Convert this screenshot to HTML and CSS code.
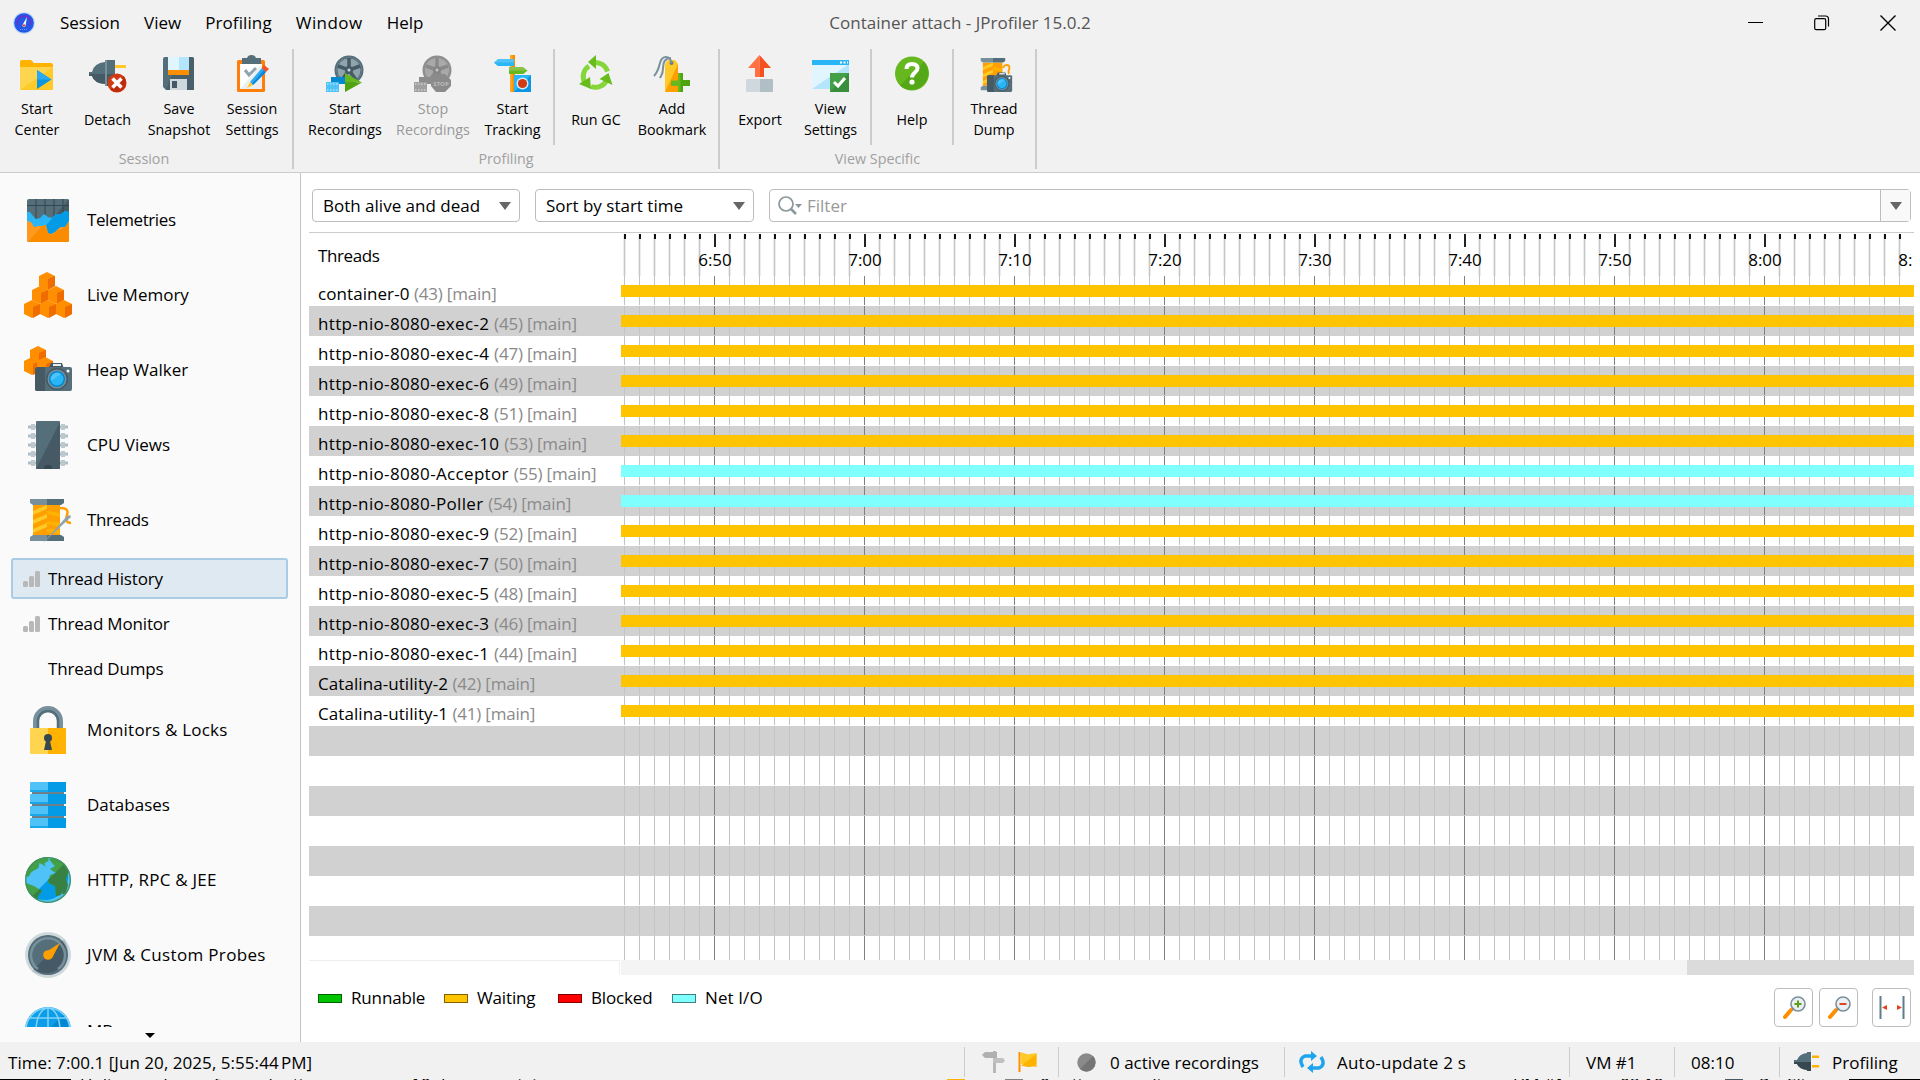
FILE: index.html
```html
<!DOCTYPE html>
<html lang="en">
<head>
<meta charset="utf-8">
<title>Container attach - JProfiler 15.0.2</title>
<link rel="stylesheet" href="styles.css">
</head>
<body>
<svg class="defs" width="0" height="0" aria-hidden="true">
  <defs>
    <g id="spool">
      <path fill="#ffa000" d="M4 6h27v30H4z"/><path fill="#ffc928" d="M4 12l14-6v4L4 16zM4 21l14-6v4L4 25zM4 30l14-6v4L4 34z"/><path fill="#ffb300" d="M18 12l13 2v4l-13-3zM18 22l13 2v4l-13-3zM18 30l13 1v4l-13-2z"/>
      <path fill="#78909c" d="M1 0h17v6H4L1 4zM1 42h17v-6H4l-3 2z"/><path fill="#546e7a" d="M18 0h17v4l-3 2H18zM18 42h17v-4l-3-2H18z"/>
    </g>
    <g id="camera">
      <path fill="#455a64" d="M13 8l3-6h11l2 6z"/><path fill="#e8eef0" d="M18 3h8v2h-8z"/><rect y="6" width="37" height="24" rx="2" fill="#546e7a"/><path fill="#455a64" d="M2 6h8v24H2a2 2 0 0 1-2-2V8z"/>
      <circle cx="22" cy="18" r="11" fill="#455a64"/><circle cx="22" cy="18" r="9.500" fill="#78909c"/><circle cx="22" cy="18" r="8" fill="#0288d1"/><circle cx="22" cy="18" r="6.500" fill="#29b6f6"/><path fill="#4fc3f7" d="M16 20a6.500 6.500 0 0 1 10-7z"/><circle cx="33" cy="10" r="1.500" fill="#fff"/>
    </g>
    <g id="cube"><path fill="#ff8f00" d="M0 4l8-4 8 4v10l-8 4-8-4z"/><path fill="#ef6c00" d="M9 7l7-3v10l-7 4z"/></g>
    <g id="reel"><circle cx="21" cy="15" r="14.500" fill="#546e7a"/><circle cx="21" cy="15" r="12.500" fill="#90a4ae"/><circle cx="21" cy="15" r="12" fill="none" stroke="#546e7a" stroke-width="1"/><g stroke="#455a64" stroke-width="3.500"><path d="M21 15V3M21 15l11-4M21 15l7 10M21 15l-7 10M21 15L10 11"/></g><circle cx="21" cy="15" r="4" fill="#455a64"/><circle cx="21" cy="15" r="1.500" fill="#cfd8dc"/></g>
    <g id="bars" fill="#b8b8b8"><rect y="11" width="5" height="6" rx="1.500"/><rect x="6" y="6" width="5" height="11" rx="1.500"/><rect x="12" y="1" width="5" height="16" rx="1.500"/></g>
    <g id="flag"><path fill="#ff8f00" d="M0 0h2v20H0z"/><path fill="#ffca28" d="M2 1c4-1 5 2 9 1 3 0 5-1 7-1v11H2z"/><path fill="#ffb300" d="M18 2v13c-4-1-5 0-8 0s-5-2-8-1z"/></g>
    <g id="lens"><circle cx="16" cy="8" r="7" fill="#eceff1" stroke="#78909c" stroke-width="1.600"/><path stroke="#ff8f00" stroke-width="4" stroke-linecap="round" d="M3 21l6-7"/><path stroke="#78909c" stroke-width="1.500" d="M10 14l2-2"/></g>
  </defs>
</svg>

<div class="window">
  <header class="titlebar">
    <svg class="logo" viewBox="0 0 22 22"><circle cx="11" cy="11" r="10.800" fill="#b9d2f5"/><circle cx="11" cy="11" r="9.800" fill="#2257e8"/><path d="M5 13a6.500 6.500 0 1 1 12 0" fill="none" stroke="#6a32c9" stroke-width="1.600"/><path fill="#fff" d="M14 5l-1.500 9a1.500 1.500 0 0 1-3-1z"/><circle cx="11" cy="13.500" r="1.200" fill="#e53935"/><path d="M7 17.500h8" stroke="#58a6f5" stroke-dasharray="1 1"/></svg>
    <nav class="menu"><span>Session</span><span>View</span><span class="menu-profiling">Profiling</span><span class="menu-window">Window</span><span>Help</span></nav>
    <h1 class="title">Container attach - JProfiler 15.0.2</h1>
    <div class="window-buttons">
      <svg viewBox="0 0 16 16"><path d="M0 7.500h15" stroke="#000" fill="none"/></svg>
      <svg viewBox="0 0 16 16"><g fill="none" stroke="#000" stroke-width="1.200"><rect x=".7" y="3.700" width="11" height="11" rx="1.500"/><path d="M4 1h7.500a3 3 0 0 1 3 3v7.500"/></g></svg>
      <svg viewBox="0 0 16 16"><path d="M.5.500l15 15M15.500.500l-15 15" stroke="#000" stroke-width="1.400"/></svg>
    </div>
  </header>

  <div class="toolbar">
    <section class="group group-session">
      <div class="tools">
        <div class="tool w72"><svg viewBox="0 0 38 38"><path fill="#ffb300" d="M2 7q0-2 2-2h9l3 3h17q2 0 2 2v5H2z"/><path fill="#ffca28" d="M2 12h33v23H2z"/><path fill="#ffd54f" d="M2 12h33L2 35z"/><path fill="#0c95e0" d="M19 15l14.500 9.500L19 34z"/><path fill="#29a9f2" d="M19 15l14.500 9.500H19z"/></svg><p>Start<br>Center</p></div>
        <div class="tool w70 single"><svg viewBox="0 0 38 38"><path fill="#546e7a" d="M0 17h3q2-9 13-10V5h10v26H16v-2Q5 28 3 21H0z"/><path fill="#455a64" d="M0 19h26v12H16v-2Q5 28 3 21H0z"/><path fill="#78909c" d="M16 5h2v26h-2z"/><path fill="#ffc928" d="M26 10h11v3H26z"/><circle cx="28" cy="28" r="9.500" fill="#d13a12"/><path fill="#bf2a0a" d="M34.700 21.300a9.500 9.500 0 0 1-13.400 13.400z"/><path stroke="#fff" stroke-width="3.600" d="M23.500 23.500l9 9M32.500 23.500l-9 9"/></svg><p>Detach</p></div>
        <div class="tool w74"><svg viewBox="0 0 38 38"><path fill="#546e7a" d="M3 4q0-2 2-2h27q2 0 2 2v31H6l-3-3z"/><path fill="#455a64" d="M19 2h13q2 0 2 2v31H6z" opacity=".7"/><path fill="#e1f5fe" d="M8 2h11v13H8z"/><path fill="#b3e5fc" d="M19 2h10v13H19z"/><path fill="#ff8f00" d="M8 15h21v5H8z"/><path fill="#cfd8dc" d="M10 24h17v11H10z"/><path fill="#455a64" d="M12 26h5v7h-5z"/></svg><p>Save<br>Snapshot</p></div>
        <div class="tool w72"><svg viewBox="0 0 38 38"><rect x="4" y="5" width="28" height="32" rx="1.500" fill="#ff7d0a"/><path fill="#fff" d="M7 9h22v25H7z"/><path fill="#eceff1" d="M29 9v25H7z"/><path fill="#546e7a" d="M9 3h5q1-3 4.500-3T23 3h5v6H9z"/><path d="M12 15l4 5 7-7" fill="none" stroke="#90a4ae" stroke-width="3"/><path fill="#29a9f2" d="M17 27L29 13l4 4-13 13z"/><path fill="#0c86d6" d="M19 29l12-14 2 2-13 13z"/><path fill="#f4511e" d="M29 13l2-3 5 4-3 3z"/><path fill="#ffca28" d="M14 33l3-6 3 3z"/></svg><p>Session<br>Settings</p></div>
      </div>
      <p class="caption">Session</p>
    </section>
    <section class="group group-profiling">
      <div class="tools">
        <div class="tool w88"><svg viewBox="0 0 38 38"><g transform="translate(2)"><use href="#reel"/></g><path fill="#0288d1" d="M5 22h15v7H5z"/><path fill="#4fc3f7" d="M0 27h13v10H0z"/><path stroke="#e1f5fe" stroke-dasharray="1.500 1.500" d="M1 29h11M1 35h11"/><path fill="#66b81e" d="M19 18l17 9.500H19z"/><path fill="#4ea30f" d="M19 37l17-9.500H19z"/></svg><p>Start<br>Recordings</p></div>
        <div class="tool w88 disabled"><svg viewBox="0 0 38 38"><circle cx="23" cy="15" r="14.500" fill="#8f8f8f"/><circle cx="23" cy="15" r="12" fill="#a9a9a9"/><path stroke="#8a8a8a" stroke-width="3.500" d="M23 15V3M23 15l11-4M23 15l7 10M23 15l-7 10M23 15L12 11"/><circle cx="23" cy="15" r="4" fill="#858585"/><circle cx="23" cy="15" r="1.500" fill="#c4c4c4"/><path fill="#8c8c8c" d="M5 22h15v7H5z"/><path fill="#a0a0a0" d="M0 27h13v10H0z"/><path stroke="#e6e6e6" stroke-dasharray="1.500 1.500" d="M1 29h11M1 35h11"/><path fill="#8b8b8b" d="M22 19h9l6 6v6l-6 6h-9l-5-6v-6z"/><text class="stop" x="27" y="30.500">STOP</text></svg><p>Stop<br>Recordings</p></div>
        <div class="tool w71"><svg viewBox="0 0 38 38"><path fill="#ffa726" d="M16 0h5v37h-5z"/><path fill="#fb8c00" d="M18.500 0H21v37h-2.500z"/><path fill="#4fc3f7" d="M0 7.500L4 4h16v7H4z"/><path fill="#29b6f6" d="M0 7.500h20V11H4z"/><path fill="#8bc34a" d="M15 12h14l4.500 3.500L29 19H15z"/><path fill="#66b81e" d="M15 15.500h18.500L29 19H15z"/><path fill="#29b6f6" d="M20 20h17v17H20z"/><path fill="#0c95e0" d="M37 20v17H20z"/><circle cx="28.500" cy="28.500" r="6" fill="#cfeefc"/><circle cx="28.500" cy="28.500" r="4.600" fill="#d13a12"/></svg><p>Start<br>Tracking</p></div>
        <i class="sep"></i>
        <div class="tool w72 single"><svg viewBox="0 0 38 38"><g fill="none" stroke="#84d63a" stroke-width="5"><path d="M17 7.500a12.500 12.500 0 0 1 13.500 9"/><path d="M30 24.500a12.500 12.500 0 0 1-16 7"/><path d="M8 28a12.500 12.500 0 0 1 4-17"/></g><path fill="#68bd1d" d="M11 7L19 0v14zM35.500 30l-4-12-9 6zM2 29l12 5-1-12z"/></svg><p>Run GC</p></div>
        <div class="tool w80"><svg viewBox="0 0 38 38"><path fill="#ffca28" d="M12 9l3-4h7l3 4v28H12z"/><path fill="#ffa000" d="M25 9v28H12z"/><circle cx="18.500" cy="8" r="2" fill="#607d8b"/><path d="M18.500 8C17 0 9 0 7 8S4 18 1 21M18 3c-6 0-8 4-8 10s-1 6-3 10" fill="none" stroke="#78909c" stroke-width="2"/><path fill="#66b81e" d="M25 18h5v7h7v6h-7v6h-5v-6h-7v-5.500h7z"/><path fill="#4ea30f" d="M27.500 18H30v7h7v6h-7v6h-2.500z"/></svg><p>Add<br>Bookmark</p></div>
      </div>
      <p class="caption">Profiling</p>
    </section>
    <section class="group group-view">
      <div class="tools">
        <div class="tool w72 single"><svg viewBox="0 0 38 38"><path fill="#ff7043" d="M7 13L18.500 0v21H14v-8z"/><path fill="#f4511e" d="M30 13L18.500 0v22H23v-9z"/><path fill="#ff7043" d="M14 12h5v10h-5z"/><path fill="#cfd8dc" d="M5 25q0-1 1-1h13v13H6q-1 0-1-1z"/><path fill="#b0bec5" d="M19 24h12q1 0 1 1v11q0 1-1 1H19z"/></svg><p>Export</p></div>
        <div class="tool w69"><svg viewBox="0 0 38 38"><path fill="#e1f5fe" d="M0 9h37v25H0z"/><path fill="#b3e5fc" d="M37 9v25H0z"/><path fill="#29b6f6" d="M0 5h37v5H0z"/><path stroke="#fff" stroke-width="2" stroke-dasharray="2 1.500" d="M28 7.500h8"/><path fill="#43a047" d="M18 18h19v19H18z"/><path fill="#388e3c" d="M37 18v19H18z"/><path d="M22 27l4 4 7-8" fill="none" stroke="#fff" stroke-width="3"/></svg><p>View<br>Settings</p></div>
        <i class="sep"></i>
        <div class="tool w70 single"><svg viewBox="0 0 38 38"><circle cx="19" cy="18.500" r="17" fill="#66b81e"/><path fill="#54a817" d="M31 6.500a17 17 0 0 1-24 24z"/><path d="M13.500 14q0-5 5.500-5t5.500 4.500c0 4-5.500 4-5.500 9" fill="none" stroke="#fff" stroke-width="4"/><circle cx="19" cy="27" r="2.600" fill="#fff"/></svg><p>Help</p></div>
        <i class="sep"></i>
        <div class="tool w70"><svg viewBox="0 0 38 38"><g transform="translate(5 3) scale(.72 .77)"><use href="#spool"/></g><path d="M28 13c1-3 4-4 6-2s-2 5 0 8" fill="none" stroke="#ffa000" stroke-width="2"/><g transform="translate(12 16) scale(.68 .7)"><use href="#camera"/></g></svg><p>Thread<br>Dump</p></div>
      </div>
      <p class="caption">View Specific</p>
    </section>
  </div>

  <div class="body">
    <aside class="sidebar">
      <div class="nav-list">
        <div class="nav"><svg viewBox="0 0 48 48"><rect x="3" y="3" width="42" height="43" rx="2" fill="#546e7a"/><path fill="#455a64" d="M45 3v30H20z"/><path stroke="#37474f" d="M3 9.500h42M12 3v20M21 3v18M30 3v18M39 3v15"/><path fill="#29b6f6" d="M3 16l3 0 3 4 3 3 4-1 4-4 4 3 4 1 4-4 5 0 4-3 4 1v18H3z"/><path fill="#039be5" d="M45 16l-4-1-4 3-5 0-14 16v5h27z"/><path fill="#ff9a1f" d="M3 25l4 1 3 5 4-1 4 0 4-1 2 8 3 1 4-2 3-3 3-2 4 0 4-6v20q0 1-2 1H5q-2 0-2-2z"/><path fill="#fb8c00" d="M18 30l3-1 3 8 3 2 4-2 3-3 3 0 4-3 4-5v18q0 2-2 2H4z"/></svg><span class="narrow">Telemetries</span></div>
        <div class="nav"><svg viewBox="0 0 48 48"><use href="#cube" x="15" y="1"/><use href="#cube" x="8" y="15"/><use href="#cube" x="24" y="15"/><use href="#cube" y="29"/><use href="#cube" x="16" y="29"/><use href="#cube" x="32" y="29"/></svg><span>Live Memory</span></div>
        <div class="nav"><svg viewBox="0 0 48 48"><use href="#cube" x="6" y="0"/><use href="#cube" x="0" y="11"/><use href="#cube" x="13" y="11"/><g transform="translate(11 15)"><use href="#camera"/></g></svg><span>Heap Walker</span></div>
        <div class="nav"><svg viewBox="0 0 48 48"><g stroke="#b0bec5" stroke-width="3"><path d="M4 6h40M4 15h40M4 24h40M4 33h40M4 42h40"/></g><g stroke="#bcc8cd" stroke-width="6"><path d="M7 6h4M7 15h4M7 24h4M7 33h4M7 42h4M37 6h4M37 15h4M37 24h4M37 33h4M37 42h4"/></g><rect x="12" width="24" height="48" rx="1" fill="#546e7a"/><path fill="#455a64" d="M36 1v46q0 1-1 1H12z"/><path fill="#37474f" d="M20 48a4 4 0 0 1 8 0z"/></svg><span>CPU Views</span></div>
        <div class="nav"><svg viewBox="0 0 48 48"><g transform="translate(5 3)"><use href="#spool"/></g><path d="M36 12c5 0 9 1 7 7s0 8 4 8" fill="none" stroke="#ffa000" stroke-width="2.500"/><path fill="#90a4ae" d="M47 21L19 47l24-27q4-2 4 1z"/></svg><span class="narrow">Threads</span></div>
        <div class="sub selected"><svg viewBox="0 0 17 18"><use href="#bars"/></svg><span>Thread History</span></div>
        <div class="sub"><svg viewBox="0 0 17 18"><use href="#bars"/></svg><span>Thread Monitor</span></div>
        <div class="sub"><svg viewBox="0 0 17 18"></svg><span>Thread Dumps</span></div>
        <div class="nav after-sub"><svg viewBox="0 0 48 48"><path d="M12 24V15a12 12 0 0 1 24 0v9" fill="none" stroke="#78909c" stroke-width="6"/><path d="M14 24V15a10 10 0 0 1 20 0v9" fill="none" stroke="#546e7a" stroke-width="2.500"/><rect x="6" y="22" width="36" height="26" rx="1" fill="#ffd54f"/><path fill="#ffb300" d="M24 22h17q1 0 1 1v24q0 1-1 1H24z"/><circle cx="24" cy="32" r="4" fill="#37474f"/><path fill="#37474f" d="M22.500 33h3L28 44h-8z"/></svg><span class="wide">Monitors &amp; Locks</span></div>
        <div class="nav"><svg viewBox="0 0 48 48"><path fill="#6d7f88" d="M8 5h32v38H8z"/><g fill="#4fc3f7"><rect x="6" y="1" width="36" height="10" rx="1"/><rect x="6" y="13" width="36" height="10" rx="1"/><rect x="6" y="25" width="36" height="10" rx="1"/><rect x="6" y="37" width="36" height="10" rx="1"/></g><g fill="#039be5"><path d="M24 1h18v10H24zM24 13h18v10H24zM24 25h18v10H24zM24 37h18v10H24z"/><path d="M6 9h36v2H6zM6 21h36v2H6zM6 33h36v2H6zM6 45h36v2H6z" opacity=".7"/></g></svg><span>Databases</span></div>
        <div class="nav"><svg viewBox="0 0 48 48"><circle cx="24" cy="24" r="23" fill="#4fc3f7"/><path fill="#039be5" d="M40 8A23 23 0 0 1 8 40z"/><path fill="#43a047" d="M24 1C12 1 3 9 1.500 20l3 1 3-5 7-4 1-5 4 2 2 2-1-4 4-2zM2 27l8 3 8 5-4 5v4C6 40 2 34 2 27zM25 3c8-2 15 3 18 8l-6 4-7 1-4-3 5-3-3-3zM26 19l9-3 8 4-4 5 1 6-5 8-3 1-1-10-7-3z"/><path fill="#388143" d="M40 8l5 7-3 8 2 6-2 7q-3 4-4 1l2-7-3 9-5 1-1-10-6-3-1-3zM18 35l-4 5v4l-6-4 8-7z"/><circle cx="24" cy="24" r="22.300" fill="none" stroke="#43915d" stroke-width="1.300"/></svg><span class="wide">HTTP, RPC &amp; JEE</span></div>
        <div class="nav"><svg viewBox="0 0 48 48"><circle cx="24" cy="24" r="23" fill="#cfd8dc"/><path fill="#b0bec5" d="M40 8A23 23 0 0 1 8 40z"/><circle cx="24" cy="24" r="20" fill="#546e7a"/><path fill="#455a64" d="M38 10A20 20 0 0 1 10 38z"/><path d="M14 38a17 17 0 1 1 20 0" fill="none" stroke="#78909c" stroke-width="2.500"/><circle cx="24" cy="24" r="4.800" fill="#ffa000"/><path fill="#ffa000" d="M36 12l-8 15-6-6z"/></svg><span class="wider">JVM &amp; Custom Probes</span></div>
        <div class="nav"><svg viewBox="0 0 48 48"><circle cx="24" cy="24" r="23" fill="#0c9ce8"/><path fill="#0288d1" d="M40 8A23 23 0 0 1 8 40z"/><g fill="none" stroke="#7fd4f9" stroke-width="1.500"><circle cx="24" cy="24" r="22"/><ellipse cx="24" cy="24" rx="12" ry="22"/><path d="M24 1v46M5 12h38M1 24h46"/></g></svg><span class="last">MBeans</span></div>
      </div>
      <div class="scroll-down"></div>
    </aside>

    <main class="content">
      <div class="filters">
        <div class="combo combo-state"><span>Both alive and dead</span><i class="arrow"></i></div>
        <div class="combo combo-sort"><span>Sort by start time</span><i class="arrow"></i></div>
        <div class="search">
          <svg viewBox="0 0 24 20"><circle cx="8" cy="8" r="7" fill="none" stroke="#8b979d" stroke-width="1.700"/><path d="M13 13l5 5" stroke="#8b979d" stroke-width="2.500"/><path fill="#8b979d" d="M17 8h7l-3.500 4z"/></svg>
          <span>Filter</span><div class="search-menu"><i class="arrow"></i></div>
        </div>
      </div>

      <div class="history">
        <div class="head">
          <div class="head-name narrow">Threads</div>
          <div class="ruler"><span>6:50</span><span>7:00</span><span>7:10</span><span>7:20</span><span>7:30</span><span>7:40</span><span>7:50</span><span>8:00</span><span>8:10</span></div>
        </div>
        <div class="rows">
          <div class="row"><div class="name">container-0 <em>(43) [main]</em></div><div class="lane"><b></b></div></div>
          <div class="row"><div class="name http">http-nio-8080-exec-2 <em>(45) [main]</em></div><div class="lane"><b></b></div></div>
          <div class="row"><div class="name http">http-nio-8080-exec-4 <em>(47) [main]</em></div><div class="lane"><b></b></div></div>
          <div class="row"><div class="name http">http-nio-8080-exec-6 <em>(49) [main]</em></div><div class="lane"><b></b></div></div>
          <div class="row"><div class="name http">http-nio-8080-exec-8 <em>(51) [main]</em></div><div class="lane"><b></b></div></div>
          <div class="row"><div class="name http">http-nio-8080-exec-10 <em>(53) [main]</em></div><div class="lane"><b></b></div></div>
          <div class="row"><div class="name http">http-nio-8080-Acceptor <em>(55) [main]</em></div><div class="lane"><b class="net"></b></div></div>
          <div class="row"><div class="name http">http-nio-8080-Poller <em>(54) [main]</em></div><div class="lane"><b class="net"></b></div></div>
          <div class="row"><div class="name http">http-nio-8080-exec-9 <em>(52) [main]</em></div><div class="lane"><b></b></div></div>
          <div class="row"><div class="name http">http-nio-8080-exec-7 <em>(50) [main]</em></div><div class="lane"><b></b></div></div>
          <div class="row"><div class="name http">http-nio-8080-exec-5 <em>(48) [main]</em></div><div class="lane"><b></b></div></div>
          <div class="row"><div class="name http">http-nio-8080-exec-3 <em>(46) [main]</em></div><div class="lane"><b></b></div></div>
          <div class="row"><div class="name http">http-nio-8080-exec-1 <em>(44) [main]</em></div><div class="lane"><b></b></div></div>
          <div class="row"><div class="name">Catalina-utility-2 <em>(42) [main]</em></div><div class="lane"><b></b></div></div>
          <div class="row"><div class="name">Catalina-utility-1 <em>(41) [main]</em></div><div class="lane"><b></b></div></div>
          <div class="row"><div class="name"></div><div class="lane"></div></div>
          <div class="row"><div class="name"></div><div class="lane"></div></div>
          <div class="row"><div class="name"></div><div class="lane"></div></div>
          <div class="row"><div class="name"></div><div class="lane"></div></div>
          <div class="row"><div class="name"></div><div class="lane"></div></div>
          <div class="row"><div class="name"></div><div class="lane"></div></div>
          <div class="row"><div class="name"></div><div class="lane"></div></div>
          <div class="row"><div class="name"></div><div class="lane"></div></div>
        </div>
        <div class="scroll"><div class="scroll-corner"></div><div class="track"><div class="thumb"></div></div></div>
      </div>

      <div class="footer">
        <div class="legend">
          <span class="key k1"><i class="runnable"></i><span>Runnable</span></span>
          <span class="key k2"><i class="waiting"></i><span>Waiting</span></span>
          <span class="key k3"><i class="blocked"></i><span>Blocked</span></span>
          <span class="key k4"><i class="netio"></i><span>Net I/O</span></span>
        </div>
        <div class="zoom">
          <button><svg viewBox="0 0 24 24"><use href="#lens"/><path d="M16 4.500v7M12.500 8h7" stroke="#5a9e1c" stroke-width="2"/></svg></button>
          <button><svg viewBox="0 0 24 24"><use href="#lens"/><path d="M12.500 8h7" stroke="#e0431f" stroke-width="2"/></svg></button>
          <button class="fit"><svg viewBox="0 0 26 24"><path d="M1.500 0v23M24.500 0v23" stroke="#607d8b" stroke-width="2"/><path fill="#e0431f" d="M3 11.500l5-2.500v5zM23 11.500L18 9v5z"/></svg></button>
        </div>
      </div>
    </main>
  </div>

  <footer class="status">
    <div class="cell s-time"><span>Time: 7:00.1 [Jun 20, 2025, 5:55:44&#8239;PM]</span></div>
    <div class="cell s-marks"><svg width="24" height="22" viewBox="0 0 24 22"><path fill="#b8b8b8" d="M11 0h3v22h-3z"/><path fill="#b0b0b0" d="M0 4l3-3h12v6H3z"/><path fill="#c0c0c0" d="M11 7h10l2 2.500-2 2.500H11z"/></svg><svg width="20" height="21" viewBox="0 0 19 21"><use href="#flag"/></svg></div>
    <div class="cell s-rec"><svg width="19" height="19" viewBox="0 0 19 19"><circle cx="9.500" cy="9.500" r="9.200" fill="#8a8a8a"/><path fill="#757575" d="M16 3a9.200 9.200 0 0 1-13 13z"/></svg><span>0 active recordings</span></div>
    <div class="cell s-auto"><svg width="26" height="22" viewBox="0 0 26 22"><g fill="none" stroke="#1fa4ee" stroke-width="3.500"><path d="M4 16q-5-8 2-11h8"/><path d="M22 6q5 8-2 11h-8"/></g><path fill="#1fa4ee" d="M12 0l6 5-6 5zM14 12l-6 5 6 5z"/></svg><span class="wide">Auto-update 2 s</span></div>
    <div class="cell s-vm"><span>VM #1</span></div>
    <div class="cell s-clock"><span>08:10</span></div>
    <div class="cell s-mode"><svg width="26" height="20" viewBox="0 0 26 20"><path fill="#546e7a" d="M0 8h3q2-6 10-7V0h4v19h-4v-1q-8-1-10-6H0z"/><path fill="#37474f" d="M0 10h17v9h-4v-1q-8-1-10-6H0z"/><path fill="#ffb300" d="M18 3.500h7v2.500h-7zM18 13h7v2.500h-7z"/></svg><span>Profiling</span></div>
  </footer>
  <div class="behind"><i class="dark dark-left"></i><span>Unlicensed copy for evaluation purposes, 10 days remaining</span><i class="b-flag"></i><i class="b-rec"></i><span>0 active recordings</span><span>VM #1</span><span>08:10</span><i class="b-plug"></i><span>Profiling</span><i class="dark"></i></div>
</div>
</body>
</html>
```
FILE: styles.css
```css
* { box-sizing: border-box; }
html, body { margin: 0; height: 100%; }
body {
  font-family: "Open Sans", "Noto Sans", sans-serif;
  font-size: 17px;
  line-height: 24px;
  color: #000;
  overflow: hidden;
}
p, h1 { margin: 0; font-weight: 400; }
svg { display: block; flex: none; }
.defs { position: absolute; }
.narrow { letter-spacing: -.4px; }
.wide { letter-spacing: .22px; }
.wider { letter-spacing: .34px; }
.window { display: flex; flex-direction: column; width: 1920px; height: 1080px; background: #f1f1f1; }

.titlebar { display: grid; grid-template-columns: 48px 1fr auto 1fr; align-items: center; height: 46px; }
.logo { width: 22px; height: 22px; margin-left: 13px; }
.menu { display: flex; gap: 24px; padding-left: 12px; }
.menu-profiling { letter-spacing: .1px; }
.menu-window { letter-spacing: .45px; }
.title { font-size: 17px; color: #555; margin-left: -48px; }
.window-buttons { display: flex; justify-content: flex-end; gap: 50px; padding-right: 24px; }
.window-buttons svg { width: 16px; height: 16px; }

.toolbar { display: flex; height: 127px; border-bottom: 1px solid #ccc; padding-top: 3px; }
.group { display: flex; flex-direction: column; height: 120px; border-right: 2px solid #ccc; }
.group-session { width: 294px; }
.group-profiling { width: 426px; }
.group-view { width: 317px; }
.tools { display: flex; height: 96px; }
.group-session .tools { padding-left: 1px; }
.group-profiling .tools { padding-left: 7px; }
.group-view .tools { padding-left: 4px; }
.tool { display: flex; flex-direction: column; align-items: center; padding-top: 6px; text-align: center; font-size: 14.3px; line-height: 21px; white-space: nowrap; }
.tool svg { width: 38px; height: 38px; margin-bottom: 5px; }
.tool.single p { padding-top: 11px; }
.w69 { width: 69px; } .w70 { width: 70px; } .w71 { width: 71px; } .w72 { width: 72px; }
.w74 { width: 74px; } .w80 { width: 80px; } .w88 { width: 88px; }
.group-session .w70 { width: 69px; }
.sep { width: 2px; margin: 0 5px; background: #ccc; flex: none; }
.disabled { color: #999; }
.stop { font: bold 6px "Open Sans", sans-serif; fill: #bbb; text-anchor: middle; }
.caption { font-size: 14.3px; line-height: 20px; color: #a0a0a0; text-align: center; padding-top: 4px; }
.group-session .caption { padding-right: 4px; }

.body { display: flex; height: 869px; }
.sidebar { width: 301px; background: #fafafa; border-right: 1px solid #c6c6c6; }
.nav-list { height: 854px; overflow: hidden; padding-top: 9px; }
.nav { display: flex; align-items: center; height: 75px; padding-left: 24px; }
.nav svg { width: 48px; height: 48px; margin-right: 15px; }
.nav .last { padding-top: 3px; }
.sub { display: flex; align-items: center; height: 41px; margin: 0 12px 4px 11px; padding-left: 12px; letter-spacing: -.17px; }
.sub svg { width: 17px; height: 18px; margin-right: 8px; }
.sub span { padding-top: 1px; }
.sub.selected { margin-top: 1px; background: #dfe9f2; border: 2px solid #a9cbe3; border-radius: 3px; padding-left: 10px; }
.after-sub { margin-top: -1px; }
.scroll-down { width: 0; margin: 6px auto 0; border: 5px solid transparent; border-top-color: #000; border-bottom: 0; }

.content { flex: 1; background: #fff; padding: 16px 6px 0 8px; }
.filters { display: flex; height: 43px; padding-left: 3px; }
.combo, .search { display: flex; align-items: center; height: 33px; border: 1px solid #bdbdbd; border-radius: 4px; }
.combo { justify-content: space-between; padding: 0 8px 0 10px; }
.combo-state { width: 208px; margin-right: 15px; }
.combo-sort { width: 219px; margin-right: 15px; }
.arrow { border: 6.5px solid transparent; border-top: 8px solid #666; border-bottom: 0; }
.search { width: 1142px; padding-left: 8px; color: #999; }
.search svg { width: 24px; height: 20px; margin-right: 5px; }
.search-menu { display: flex; align-items: center; justify-content: center; width: 30px; height: 31px; margin-left: auto; border-left: 1px solid #bdbdbd; background: #f9f9f9; }

.history { width: 1605px; border-top: 1px solid #ccc; }
.head { display: flex; height: 43px; }
.head-name { width: 312px; padding: 11px 0 0 9px; }
.ruler {
  display: flex; width: 1293px; padding: 15px 0 0 19px; margin-top: 1px; overflow: hidden;
  background:
    repeating-linear-gradient(90deg, #222 0 2px, transparent 2px 150px) 93px 0 / 1200px 13px no-repeat,
    repeating-linear-gradient(90deg, #111 0 2px, transparent 2px 15px) 3px 0 / 1290px 5px no-repeat,
    repeating-linear-gradient(90deg, #fff 0 3px, transparent 3px 150px) 92px 0 / 1201px 100% no-repeat,
    repeating-linear-gradient(90deg, #ececec 0 1px, #c6c6c6 1px 2px, #ececec 2px 3px, transparent 3px 15px) 2px 0 / 1291px 100% no-repeat;
}
.ruler span { width: 150px; text-align: center; flex: none; line-height: 22px; }
.rows { height: 684px; overflow: hidden; }
.row { display: flex; height: 30px; }
.row:nth-child(even) { background: #d1d1d1; }
.name { width: 312px; padding: 6px 0 0 9px; line-height: 24px; white-space: pre; letter-spacing: .07px; }
.name.http { letter-spacing: .34px; }
.name em { font-style: normal; color: #8a8a8a; letter-spacing: -.2px; }
.lane {
  width: 1293px; padding-top: 9px;
  background:
    repeating-linear-gradient(90deg, #808080 0 1px, transparent 1px 150px) 93px 0 / 1200px 29px no-repeat,
    repeating-linear-gradient(90deg, #c3c3c3 0 1px, transparent 1px 15px) 3px 0 / 1290px 29px no-repeat;
}
.lane b { display: block; height: 12px; background: #ffc400; }
.lane .net { background: #80ffff; }
.scroll { display: flex; height: 15px; gap: 1px; }
.scroll-corner { width: 311px; height: 14px; border: solid #eee; border-width: 1px 1px 0 0; }
.track { flex: 1; background: #f4f4f4; display: flex; justify-content: flex-end; }
.thumb { width: 227px; background: #dbdbdb; }

.footer { display: flex; justify-content: space-between; padding: 11px 3px 0 9px; }
.legend { display: flex; letter-spacing: -.15px; }
.key { display: flex; align-items: center; height: 24px; gap: 9px; }
.k1 { width: 126px; } .k2 { width: 114px; } .k3 { width: 114px; }
.key i { width: 24px; height: 9px; border: 1px solid; }
.key .runnable { background: #00c400; border-color: #006200; }
.key .waiting { background: #ffc400; border-color: #806200; }
.key .blocked { background: #f00; border-color: #800000; }
.key .netio { background: #80ffff; border-color: #408080; }
.k4 { letter-spacing: .1px; }
.zoom { display: flex; gap: 6px; padding-top: 2px; }
.zoom button { display: flex; align-items: center; justify-content: center; width: 39px; height: 39px; padding: 0; background: #fff; border: 1px solid #bdbdbd; border-radius: 4px; }
.zoom svg { width: 24px; height: 24px; }
.zoom .fit { margin-left: 8px; }
.zoom .fit svg { width: 26px; }

.status { display: flex; height: 37px; padding-top: 5px; flex: none; }
.cell { display: flex; align-items: center; height: 30px; white-space: nowrap; }
.cell span { padding-top: 1px; }
.cell + .cell { border-left: 1px solid #ccc; }
.s-time { width: 964px; padding-left: 8px; letter-spacing: .05px; }
.s-marks { width: 94px; padding-left: 17px; gap: 12px; }
.s-rec { width: 226px; padding-left: 18px; gap: 14px; }
.s-auto { width: 285px; padding-left: 14px; gap: 12px; }
.s-vm { width: 105px; padding-left: 16px; }
.s-clock { width: 105px; padding-left: 16px; }
.s-mode { width: 141px; padding-left: 14px; gap: 12px; }
.behind { display: grid; grid-template-columns: 80px 867px 58px 35px 474px 106px 105px 34px 90px 71px; height: 1px; overflow: hidden; }
.behind span { line-height: 24px; margin-top: -7px; height: 24px; white-space: nowrap; }
.behind i { height: 1px; }
.dark { background: #000; }
.dark-left { width: 71px; }
.b-flag { width: 18px; background: #ffb300; }
.b-rec { width: 18px; background: #808080; }
.b-plug { width: 18px; background: #455a64; }
```
